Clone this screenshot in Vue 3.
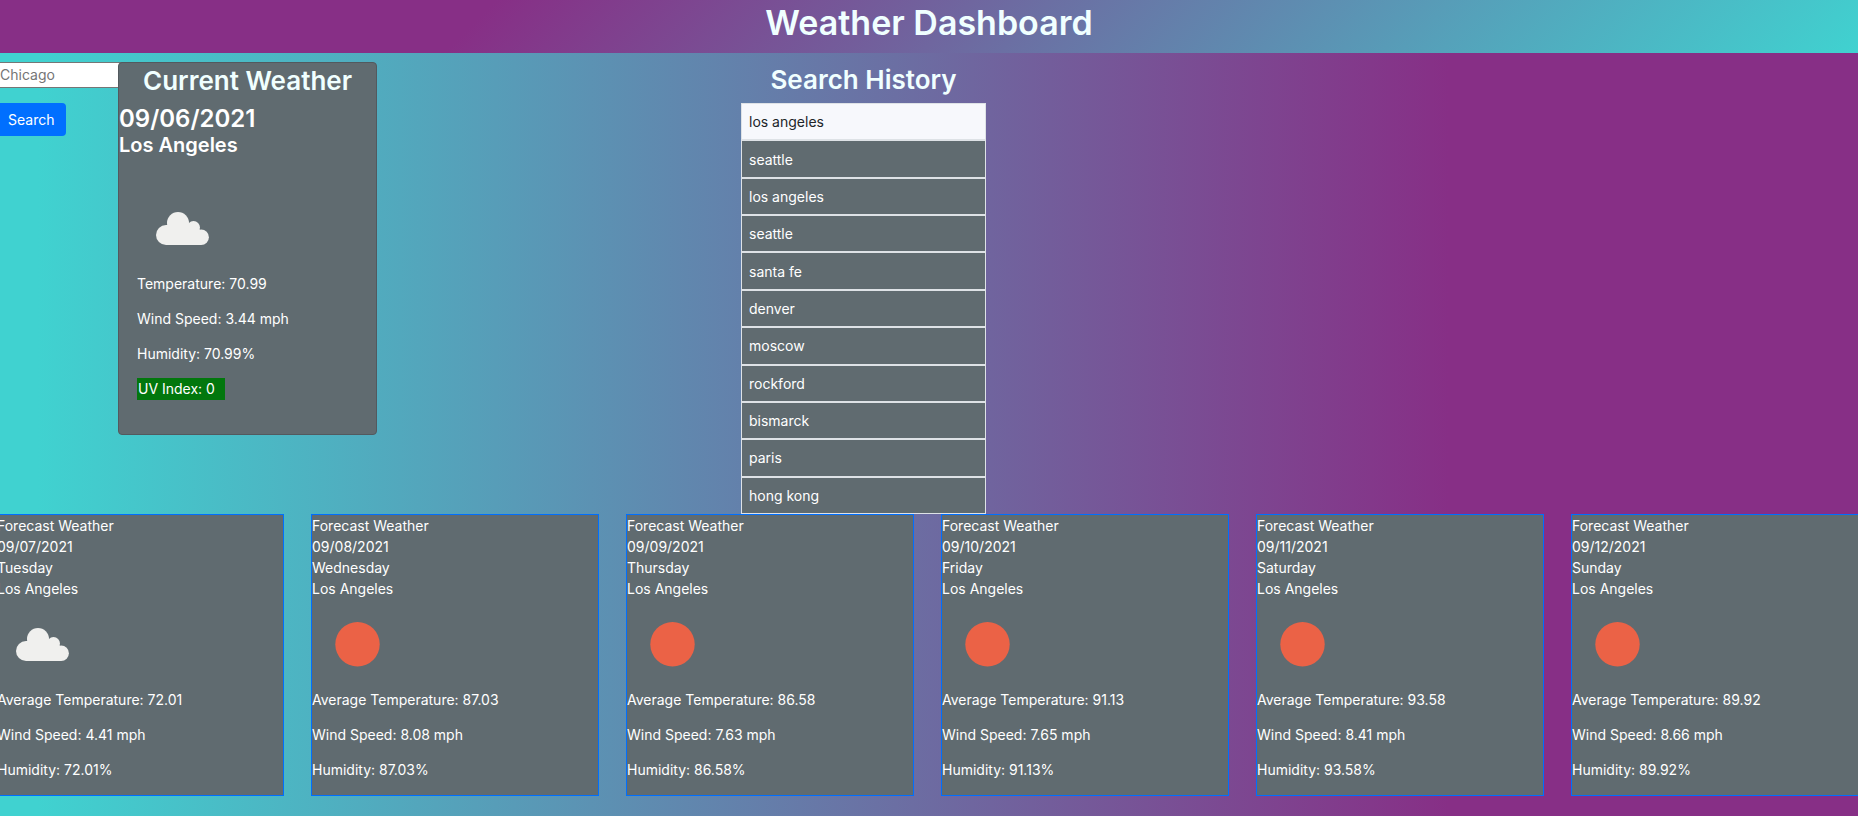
<script setup>
import { ref } from 'vue'

const city = ref('')
const history = [
  'los angeles', 'seattle', 'los angeles', 'seattle', 'santa fe', 'denver',
  'moscow', 'rockford', 'bismarck', 'paris', 'hong kong',
]
const selected = ref(0)
const forecast = [
  { date: '09/07/2021', day: 'Tuesday', icon: 'cloud', temp: '72.01', wind: '4.41' },
  { date: '09/08/2021', day: 'Wednesday', icon: 'sun', temp: '87.03', wind: '8.08' },
  { date: '09/09/2021', day: 'Thursday', icon: 'sun', temp: '86.58', wind: '7.63' },
  { date: '09/10/2021', day: 'Friday', icon: 'sun', temp: '91.13', wind: '7.65' },
  { date: '09/11/2021', day: 'Saturday', icon: 'sun', temp: '93.58', wind: '8.41' },
  { date: '09/12/2021', day: 'Sunday', icon: 'sun', temp: '89.92', wind: '8.66' },
]
</script>

<template>
  <div class="page">
    <header class="banner">
      <h1>Weather Dashboard</h1>
    </header>

    <main>
      <div class="top">
        <form class="search" @submit.prevent>
          <input v-model="city" type="text" placeholder="Chicago" aria-label="City" />
          <button type="submit">Search</button>
        </form>

        <section class="current">
          <h2>Current Weather</h2>
          <h3>09/06/2021</h3>
          <h4>Los Angeles</h4>
          <div class="current-body">
            <svg class="icon" viewBox="0 0 88 88" aria-hidden="true">
              <g fill="#f0f0ee">
                <circle cx="29" cy="52" r="10" />
                <circle cx="41" cy="40" r="11" />
                <circle cx="56.5" cy="44.5" r="6.5" />
                <circle cx="64.2" cy="54.3" r="7.7" />
                <path d="M29 62V42H57L64.2 48V62Z" />
              </g>
            </svg>
            <p>Temperature: 70.99</p>
            <p>Wind Speed: 3.44 mph</p>
            <p>Humidity: 70.99%</p>
            <p class="uv">UV Index: 0</p>
          </div>
        </section>

        <section class="history">
          <h2>Search History</h2>
          <ul>
            <li v-for="(name, i) in history" :key="i">
              <button type="button" :class="{ active: i === selected }" @click="selected = i">{{ name }}</button>
            </li>
          </ul>
        </section>
      </div>

      <section class="forecast">
        <article v-for="d in forecast" :key="d.date">
          <div>Forecast Weather</div>
          <div>{{ d.date }}</div>
          <div>{{ d.day }}</div>
          <div>Los Angeles</div>
          <svg class="icon" viewBox="0 0 88 88" aria-hidden="true">
            <circle v-if="d.icon === 'sun'" cx="45.5" cy="45.3" r="22.2" fill="#eb6246" />
            <g v-else fill="#f0f0ee">
              <circle cx="29" cy="52" r="10" />
              <circle cx="41" cy="40" r="11" />
              <circle cx="56.5" cy="44.5" r="6.5" />
              <circle cx="64.2" cy="54.3" r="7.7" />
              <path d="M29 62V42H57L64.2 48V62Z" />
            </g>
          </svg>
          <p>Average Temperature: {{ d.temp }}</p>
          <p>Wind Speed: {{ d.wind }} mph</p>
          <p>Humidity: {{ d.temp }}%</p>
        </article>
      </section>
    </main>
  </div>
</template>

<style>
body {
  margin: 0;
}
</style>

<style scoped>
.page {
  min-height: 100vh;
  box-sizing: border-box;
  overflow: hidden;
  font: 14px/21px Inter, "Liberation Sans", sans-serif;
  color: #fff;
  background: linear-gradient(90deg, #40d2d0 2%, #872f86 78%);
}
.page * {
  box-sizing: border-box;
}
h1, h2, h3, h4, p, ul {
  margin: 0;
  padding: 0;
}
h1, h2, h3, h4 {
  font-weight: 600;
}
.banner {
  padding: 2px 0 9px;
  text-align: center;
  background: linear-gradient(315deg, #40d2d0 0%, #872f86 74%);
}
h1 {
  font-size: 34px;
  line-height: 42px;
  color: azure;
}
h2 {
  font-size: 26px;
  line-height: 36px;
  text-align: center;
  color: azure;
}
h3 {
  margin-top: 5px;
  font-size: 24px;
  line-height: 29px;
}
h4 {
  font-size: 20px;
  line-height: 25px;
}
.top {
  display: grid;
  grid-template-columns: 118px 259px 364fr 245px 872fr;
  min-height: 461px;
  padding-top: 9px;
}
.search {
  margin-left: -3px;
}
.search input {
  display: block;
  width: 140px;
  height: 26px;
  padding: 0 2px 2px;
  border: 1px solid #767676;
  background: #fff;
  color: #212529;
  font: inherit;
}
.search input::placeholder {
  color: #757575;
  opacity: 1;
}
.search button {
  display: block;
  height: 33px;
  margin-top: 15px;
  padding: 0 12px 0 11px;
  border: 0;
  border-radius: 4px;
  background: #006fff;
  color: #fff;
  font: inherit;
}
.current {
  position: relative;
  align-self: start;
  border: 1px solid #53595e;
  border-radius: 4px;
  background: #606b70;
}
.current-body {
  padding: 25px 18px 20px;
}
.icon {
  display: block;
  width: 88px;
  height: 88px;
  margin-bottom: 2px;
}
p {
  margin-bottom: 14px;
}
.uv {
  width: 88px;
  height: 22px;
  padding-left: 1px;
  background: #02770d;
}
.history {
  grid-column: 4;
  display: flex;
  flex-direction: column;
}
.history h2 {
  margin-bottom: 5px;
}
.history ul {
  flex: 1;
  display: flex;
  flex-direction: column;
  list-style: none;
}
.history li {
  flex: 1;
  display: flex;
}
.history button {
  flex: 1;
  padding: 0 7px;
  border: 1px solid #dee2e6;
  background: #606b70;
  color: #fff;
  font: inherit;
  text-align: left;
}
.history button.active {
  background: #f7f8fc;
  color: #212529;
}
.forecast {
  display: grid;
  grid-template-columns: repeat(6, 1fr);
  gap: 27px;
  margin: 0 -1px 20px -4px;
}
.forecast article {
  padding-bottom: 1px;
  border: 1px solid #006fff;
  background: #606b70;
}
</style>
